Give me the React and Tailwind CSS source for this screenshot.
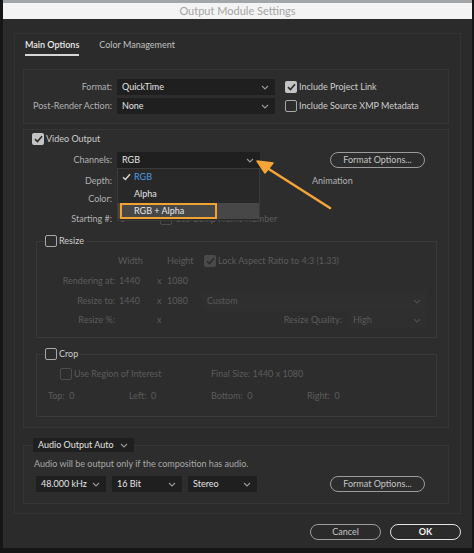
import React from 'react';

// Output Module Settings (After Effects style dialog)

const Chevron = ({ className = '' }) => (
    <svg width="8" height="5" viewBox="0 0 8 5" className={className}>
        <path d="M1 1 L4 4 L7 1" fill="none" stroke="currentColor" strokeWidth="1.1" />
    </svg>
);

const Check = ({ checked, disabled }) => {
    if (checked) {
        return (
            <span className={`flex items-center justify-center w-[12px] h-[12px] rounded-[2px] shrink-0 ${disabled ? 'bg-[#4a4a4a]' : 'bg-[#c4c4c4]'}`}>
                <svg width="9" height="8" viewBox="0 0 9 8">
                    <path d="M1 4.2 L3.4 6.5 L8 1.2" fill="none" stroke={disabled ? '#2c2c2c' : '#2b2b2b'} strokeWidth="1.6" />
                </svg>
            </span>
        );
    }
    return <span className={`w-[12px] h-[12px] rounded-[2px] border shrink-0 ${disabled ? 'border-[#4c4c4c]' : 'border-[#a8a8a8]'}`} />;
};

const Select = ({ value, w, h = 'h-[16px]', disabled, bold }) => (
    <div className={`${w} ${h} flex items-center justify-between pl-[5px] pr-[6px] shrink-0 whitespace-nowrap ${disabled ? 'bg-[#2f2f2f] text-[#5a5a5a]' : 'bg-[#1f1f1f] text-[#e4e4e4]'}`}>
        <span className={bold ? 'font-semibold' : ''}>{value}</span>
        <Chevron className={disabled ? 'text-[#4e4e4e]' : 'text-[#9a9a9a]'} />
    </div>
);

const PillButton = ({ children, w = 'w-[95px]', strong }) => (
    <div className={`${w} h-[16px] rounded-full border flex items-center justify-center shrink-0 whitespace-nowrap ${strong ? 'border-[#e2e2e2] text-[#f2f2f2] font-bold' : 'border-[#9c9c9c] text-[#c6c6c6]'}`}>
        {children}
    </div>
);

const Label = ({ children, w = 'w-[80px]', dim }) => (
    <span className={`${w} text-right shrink-0 whitespace-nowrap ${dim ? 'text-[#5c5c5c]' : 'text-[#b2b2b2]'}`}>{children}</span>
);

const App = () => {
    return (
        <div className="relative w-[474px] h-[553px] overflow-hidden bg-[#161616] text-[9px] leading-[12px] whitespace-nowrap" style={{ fontFamily: 'Lato, "Open Sans", sans-serif' }}>
            <div className="ml-[3px] w-[469px] h-[548px] flex flex-col bg-[#2b2b2b]">
                {/* title bar */}
                <div className="h-[19px] shrink-0 bg-[#f3f3f3] border-t-[3px] border-[#a3a6a9] flex items-center justify-center text-[11px] text-[#a4a4a4]">
                    Output Module Settings
                </div>

                <div className="flex-1 flex flex-col pt-[14px] px-[11px]">
                    {/* tab panel */}
                    <div className="border border-[#333333] flex flex-col px-[8px] pb-[9px] h-[481px]">
                        <div className="flex gap-[20px] pl-[2px] pt-[5px] h-[26px]">
                            <div className="flex flex-col items-start">
                                <span className="text-[#ececec] font-semibold">Main Options</span>
                                <span className="mt-[3px] w-full h-[2px] bg-[#d6d6d6]" />
                            </div>
                            <span className="text-[#c0c0c0]">Color Management</span>
                        </div>

                        {/* format box */}
                        <div className="mt-[9px] w-[426px] border border-[#363636] bg-[#2d2d2d] pt-[9px] pb-[9px] pl-[8px] flex flex-col gap-[3px]">
                            <div className="flex items-center h-[16px]">
                                <Label>Format:</Label>
                                <span className="w-[5px]" />
                                <Select value="QuickTime" w="w-[158px]" />
                                <span className="w-[10px]" />
                                <Check checked />
                                <span className="ml-[2px] text-[#cdcdcd]">Include Project Link</span>
                            </div>
                            <div className="flex items-center h-[16px]">
                                <Label>Post-Render Action:</Label>
                                <span className="w-[5px]" />
                                <Select value="None" w="w-[158px]" />
                                <span className="w-[10px]" />
                                <Check />
                                <span className="ml-[2px] text-[#cdcdcd]">Include Source XMP Metadata</span>
                            </div>
                        </div>

                        {/* video box */}
                        <div className="mt-[5px] w-[426px] border border-[#363636] bg-[#2d2d2d] pl-[8px] pb-[10px] flex flex-col">
                            <div className="flex items-center h-[16px] mt-[1px]">
                                <Check checked />
                                <span className="ml-[2px] text-[#cdcdcd]">Video Output</span>
                            </div>
                            <div className="flex items-center h-[16px] mt-[5px]">
                                <Label>Channels:</Label>
                                <span className="w-[5px]" />
                                <Select value="RGB" w="w-[143px]" />
                                <span className="w-[70px]" />
                                <PillButton>Format Options...</PillButton>
                            </div>
                            <div className="flex items-center h-[16px] mt-[5px]">
                                <Label>Depth:</Label>
                                <span className="w-[5px]" />
                                <span className="w-[195px]" />
                                <span className="text-[#b2b2b2]">Animation</span>
                            </div>
                            <div className="flex items-center h-[16px] mt-[2px]">
                                <Label>Color:</Label>
                            </div>
                            <div className="flex items-center h-[16px] mt-[4px]">
                                <Label>Starting #:</Label>
                                <span className="w-[8px]" />
                                <span className="w-[40px] text-[#5c5c5c]">0</span>
                                <Check disabled />
                                <span className="ml-[3px] text-[#5c5c5c]">Use Comp Frame Number</span>
                            </div>

                            {/* resize */}
                            <fieldset className="mt-[8px] ml-[4px] w-[401px] border border-[#393939] pb-[9px]">
                                <legend className="ml-[8px] pr-[2px] flex items-center h-[12px]">
                                    <Check />
                                    <span className="ml-[2px] text-[#cdcdcd]">Resize</span>
                                </legend>
                                <div className="flex flex-col text-[#5c5c5c]">
                                    <div className="flex items-center h-[16px] mt-[6px]">
                                        <span className="w-[81px]" />
                                        <span className="w-[49px]">Width</span>
                                        <span className="w-[37px]">Height</span>
                                        <Check checked disabled />
                                        <span className="ml-[2px]">Lock Aspect Ratio to 4:3 (1.33)</span>
                                    </div>
                                    <div className="flex items-center h-[16px] mt-[4px]">
                                        <Label w="w-[78px]" dim>Rendering at:</Label>
                                        <span className="w-[4px]" />
                                        <span className="w-[38px]">1440</span>
                                        <span className="w-[10px]">x</span>
                                        <span className="w-[35px]">1080</span>
                                    </div>
                                    <div className="flex items-center h-[16px] mt-[4px]">
                                        <Label w="w-[78px]" dim>Resize to:</Label>
                                        <span className="w-[4px]" />
                                        <span className="w-[38px]">1440</span>
                                        <span className="w-[10px]">x</span>
                                        <span className="w-[35px]">1080</span>
                                        <Select value="Custom" w="w-[225px]" disabled />
                                    </div>
                                    <div className="flex items-center h-[16px] mt-[3px]">
                                        <Label w="w-[78px]" dim>Resize %:</Label>
                                        <span className="w-[42px]" />
                                        <span className="w-[10px]">x</span>
                                        <Label w="w-[175px]" dim>Resize Quality:</Label>
                                        <span className="w-[6px]" />
                                        <Select value="High" w="w-[79px]" disabled />
                                    </div>
                                </div>
                            </fieldset>

                            {/* crop */}
                            <fieldset className="mt-[10px] ml-[4px] w-[401px] border border-[#393939] pb-[12px]">
                                <legend className="ml-[8px] pr-[2px] flex items-center h-[12px]">
                                    <Check />
                                    <span className="ml-[2px] text-[#cdcdcd]">Crop</span>
                                </legend>
                                <div className="flex flex-col text-[#5c5c5c]">
                                    <div className="flex items-center h-[16px] mt-[6px] pl-[23px]">
                                        <Check disabled />
                                        <span className="ml-[2px] w-[137px]">Use Region of Interest</span>
                                        <span>Final Size: 1440 x 1080</span>
                                    </div>
                                    <div className="flex items-center h-[16px] mt-[6px] pl-[11px]">
                                        <span className="w-[81px]">Top:&nbsp; 0</span>
                                        <span className="w-[82px]">Left:&nbsp; 0</span>
                                        <span className="w-[96px]">Bottom:&nbsp; 0</span>
                                        <span>Right:&nbsp; 0</span>
                                    </div>
                                </div>
                            </fieldset>
                        </div>

                        {/* audio */}
                        <fieldset className="mt-[10px] w-[426px] border border-[#363636] bg-[#2d2d2d] pl-[10px] pb-[11px]">
                            <legend className="-ml-[1px]">
                                <Select value="Audio Output Auto" w="w-[101px]" h="h-[14px]" />
                            </legend>
                            <div className="mt-[6px] text-[#a8a8a8] h-[12px]">Audio will be output only if the composition has audio.</div>
                            <div className="flex items-center h-[16px] mt-[6px] ml-[2px] gap-[6px]">
                                <Select value="48.000 kHz" w="w-[70px]" />
                                <Select value="16 Bit" w="w-[70px]" />
                                <Select value="Stereo" w="w-[69px]" />
                                <span className="w-[61px]" />
                                <PillButton>Format Options...</PillButton>
                            </div>
                        </fieldset>
                    </div>

                    <div className="flex justify-end gap-[9px] mt-[10px]">
                        <PillButton w="w-[71px]">Cancel</PillButton>
                        <PillButton w="w-[71px]" strong>OK</PillButton>
                    </div>
                </div>
            </div>

            {/* channels dropdown */}
            <div className="absolute left-[117px] top-[168px] w-[143px] h-[53px] bg-[#282828] border border-[#3a3a3a] flex flex-col">
                <div className="flex items-center h-[16px] text-[#4a9ce2]">
                    <span className="w-[16px] pl-[4px]">
                        <svg width="9" height="8" viewBox="0 0 9 8">
                            <path d="M1 4.2 L3.4 6.5 L8 1.2" fill="none" stroke="#d8d8d8" strokeWidth="1.4" />
                        </svg>
                    </span>
                    RGB
                </div>
                <div className="flex items-center h-[18px] pl-[16px] text-[#e2e2e2]">Alpha</div>
                <div className="flex items-center h-[16px] bg-[#474747] pl-[2px]">
                    <div className="w-[97px] h-[16px] border-2 border-[#f0a232] flex items-center pl-[12px] text-[#e8e8e8]">RGB + Alpha</div>
                </div>
            </div>

            {/* annotation arrow */}
            <svg className="absolute inset-0 pointer-events-none" width="474" height="553">
                <line x1="330" y1="208" x2="264" y2="166" stroke="#f5a535" strokeWidth="2.6" strokeLinecap="round" />
                <path d="M257 161 L273 163 L265 173 Z" fill="#f5a535" stroke="#f5a535" strokeWidth="1.5" strokeLinejoin="round" />
            </svg>
        </div>
    );
};

export default App;
